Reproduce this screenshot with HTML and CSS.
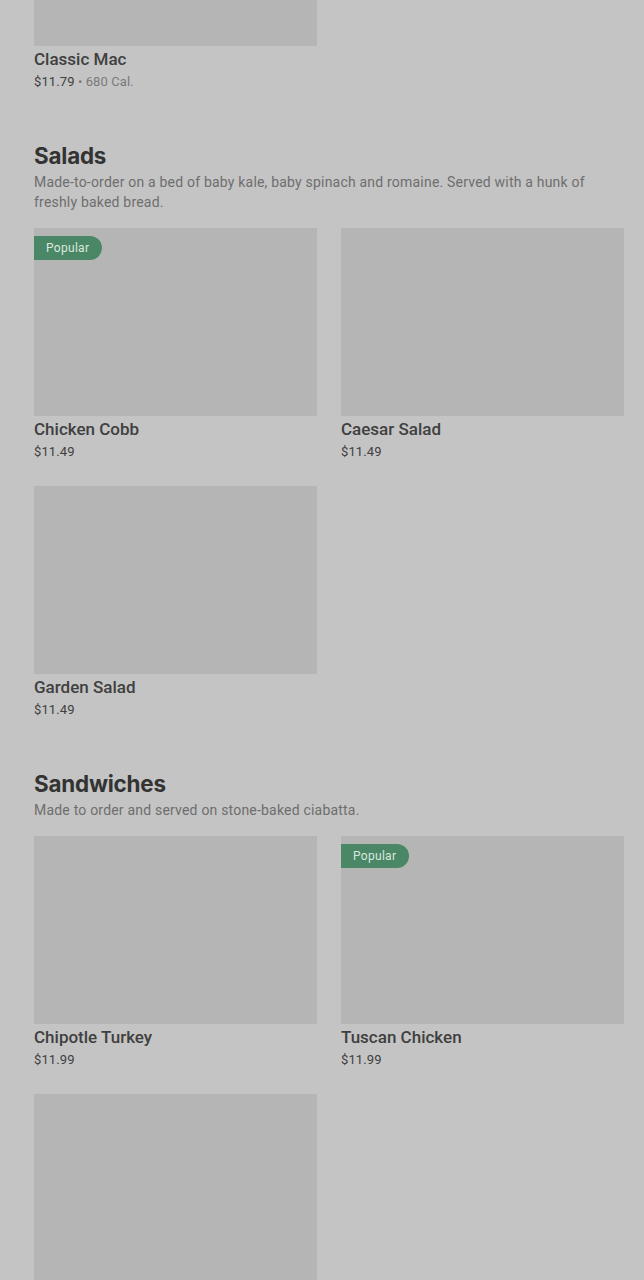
FILE: index.html
```html
<!DOCTYPE html>
<html lang="en">
<head>
    <meta charset="UTF-8">
    <meta name="viewport" content="width=device-width, initial-scale=1.0">
    <title>Menu</title>
    <link rel="stylesheet" href="styles.css">
</head>
<body>
    <main class="menu">
        <section class="section">
            <div class="grid">
                <div class="item">
                    <div class="item-image"></div>
                    <div class="item-name">Classic Mac</div>
                    <div class="item-meta">$11.79 <span class="item-cal">• 680 Cal.</span></div>
                </div>
            </div>
        </section>

        <section class="section">
            <h2 class="section-title">Salads</h2>
            <p class="section-desc">Made-to-order on a bed of baby kale, baby spinach and romaine. Served with a hunk of freshly baked bread.</p>
            <div class="grid">
                <div class="item">
                    <div class="item-image"><span class="badge">Popular</span></div>
                    <div class="item-name">Chicken Cobb</div>
                    <div class="item-meta">$11.49</div>
                </div>
                <div class="item">
                    <div class="item-image"></div>
                    <div class="item-name">Caesar Salad</div>
                    <div class="item-meta">$11.49</div>
                </div>
                <div class="item">
                    <div class="item-image"></div>
                    <div class="item-name">Garden Salad</div>
                    <div class="item-meta">$11.49</div>
                </div>
            </div>
        </section>

        <section class="section">
            <h2 class="section-title">Sandwiches</h2>
            <p class="section-desc">Made to order and served on stone-baked ciabatta.</p>
            <div class="grid">
                <div class="item">
                    <div class="item-image"></div>
                    <div class="item-name">Chipotle Turkey</div>
                    <div class="item-meta">$11.99</div>
                </div>
                <div class="item">
                    <div class="item-image"><span class="badge">Popular</span></div>
                    <div class="item-name">Tuscan Chicken</div>
                    <div class="item-meta">$11.99</div>
                </div>
                <div class="item">
                    <div class="item-image"></div>
                </div>
            </div>
        </section>
    </main>
</body>
</html>
```

FILE: styles.css
```css
* {
    margin: 0;
    padding: 0;
    box-sizing: border-box;
}

body {
    font-family: Roboto, "Noto Sans", sans-serif;
    background: #c4c4c4;
    color: #404040;
    overflow: hidden;
}

.menu {
    padding-left: 34px;
    margin-top: -142px;
}

.section {
    margin-bottom: 48px;
}

.section-title {
    font-family: Inter, Roboto, sans-serif;
    font-size: 22.4px;
    font-weight: 700;
    line-height: 32px;
    color: #333333;
    letter-spacing: -0.2px;
}

.section-desc {
    font-size: 14px;
    line-height: 20px;
    letter-spacing: 0.2px;
    color: #6e6e6e;
    max-width: 570px;
    margin-bottom: 16px;
}

.grid {
    display: grid;
    grid-template-columns: repeat(2, 283px);
    column-gap: 24px;
    row-gap: 24px;
}

.item-image {
    position: relative;
    height: 188px;
    background: #b5b5b5;
}

.badge {
    position: absolute;
    top: 8px;
    left: 0;
    height: 24px;
    padding: 0 13px 0 12px;
    line-height: 24px;
    font-size: 12px;
    letter-spacing: 0.3px;
    color: #d9e8de;
    background: #4a8766;
    border-radius: 0 12px 12px 0;
}

.item-name {
    margin-top: 2px;
    font-size: 17px;
    font-weight: 500;
    line-height: 22px;
    color: #404040;
}

.item-meta {
    margin-top: 2px;
    font-size: 13px;
    line-height: 20px;
    letter-spacing: 0.1px;
    color: #404040;
}

.item-cal {
    color: #7a7a7a;
}
```
